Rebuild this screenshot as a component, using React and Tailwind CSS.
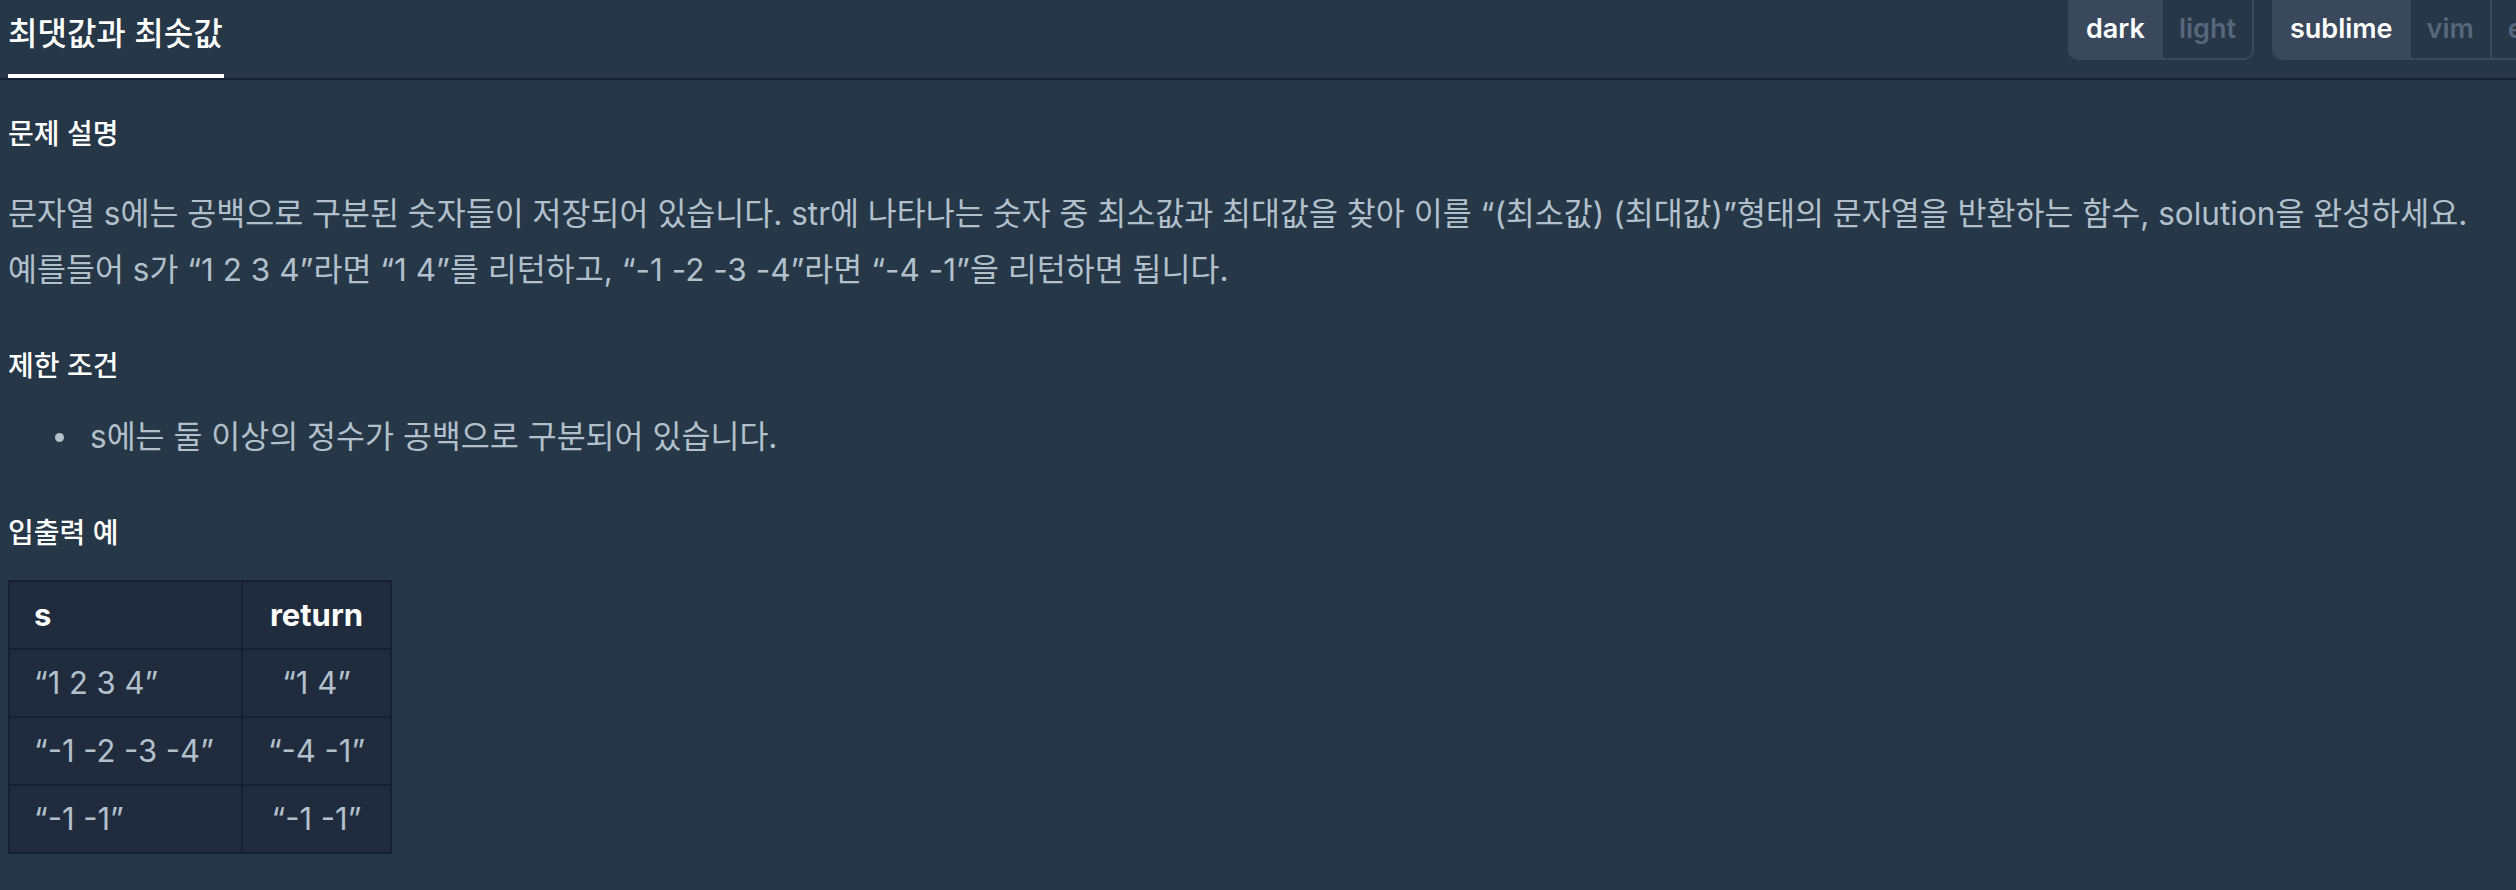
const rows = [
  ["“1 2 3 4”", "“1 4”"],
  ["“-1 -2 -3 -4”", "“-4 -1”"],
  ["“-1 -1”", "“-1 -1”"],
];

function Toggle({ items, active }) {
  return (
    <div className="flex h-[60px] shrink-0 overflow-hidden rounded-b-[10px] border-2 border-t-0 border-[#3a485c]">
      {items.map((item) =>
        item === active ? (
          <div key={item} className="flex items-center bg-[#3a485c] px-[16px] text-[27px] font-semibold text-white">
            {item}
          </div>
        ) : (
          <div key={item} className="flex items-center border-l-2 border-[#3a485c] px-[16px] text-[27px] font-semibold text-[#56667b]">
            {item}
          </div>
        )
      )}
    </div>
  );
}

export default function App() {
  return (
    <div className="min-h-screen bg-[#263747] font-[Inter,'Noto_Sans_CJK_KR',sans-serif]">
      <div className="flex h-[80px] overflow-hidden border-b-2 border-[#172030] pl-2">
        <div className="w-[2060px] shrink-0">
          <div className="-mb-[2px] inline-flex h-[80px] items-center border-b-[6px] border-white pb-[6px] pr-px text-[32px] font-medium text-white">
            최댓값과 최솟값
          </div>
        </div>
        <div className="flex shrink-0 gap-[18px] self-start">
          <Toggle items={["dark", "light"]} active="dark" />
          <Toggle items={["sublime", "vim", "emacs"]} active="sublime" />
        </div>
      </div>

      <div className="px-2 pb-10">
        <h5 className="mt-[34px] text-[28px] font-medium leading-[40px] text-white">문제 설명</h5>
        <p className="mt-[32px] text-[31.5px] leading-[56px] text-[#b2c0cc]">
          문자열 s에는 공백으로 구분된 숫자들이 저장되어 있습니다. str에 나타나는 숫자 중 최소값과 최대값을 찾아 이를 “(최소값) (최대값)”형태의 문자열을 반환하는 함수, solution을 완성하세요.
          <br />
          예를들어 s가 “1 2 3 4”라면 “1 4”를 리턴하고, “-1 -2 -3 -4”라면 “-4 -1”을 리턴하면 됩니다.
        </p>

        <h5 className="mt-[48px] text-[28px] font-medium leading-[40px] text-white">제한 조건</h5>
        <ul className="mt-[23px] pl-[47px] text-[31.5px] leading-[56px] text-[#b2c0cc]">
          <li className="flex items-center">
            <span className="mr-[26px] size-[9px] shrink-0 rounded-full bg-[#b2c0cc]" />
            s에는 둘 이상의 정수가 공백으로 구분되어 있습니다.
          </li>
        </ul>

        <h5 className="mt-[48px] text-[28px] font-medium leading-[40px] text-white">입출력 예</h5>
        <table className="mt-[27px] border-collapse border-2 border-[#172030] bg-[#202b3d] text-[31px] whitespace-nowrap">
          <thead>
            <tr className="h-[68px]">
              <th className="w-[233px] border-2 border-[#172030] px-[24px] text-left font-bold text-white">s</th>
              <th className="w-[149px] border-2 border-[#172030] px-[24px] text-center font-bold text-white">return</th>
            </tr>
          </thead>
          <tbody>
            {rows.map(([s, r]) => (
              <tr key={s} className="h-[68px]">
                <td className="border-2 border-[#172030] px-[24px] text-left text-[#b2c0cc]">{s}</td>
                <td className="border-2 border-[#172030] px-[24px] text-center text-[#b2c0cc]">{r}</td>
              </tr>
            ))}
          </tbody>
        </table>
      </div>
    </div>
  );
}
